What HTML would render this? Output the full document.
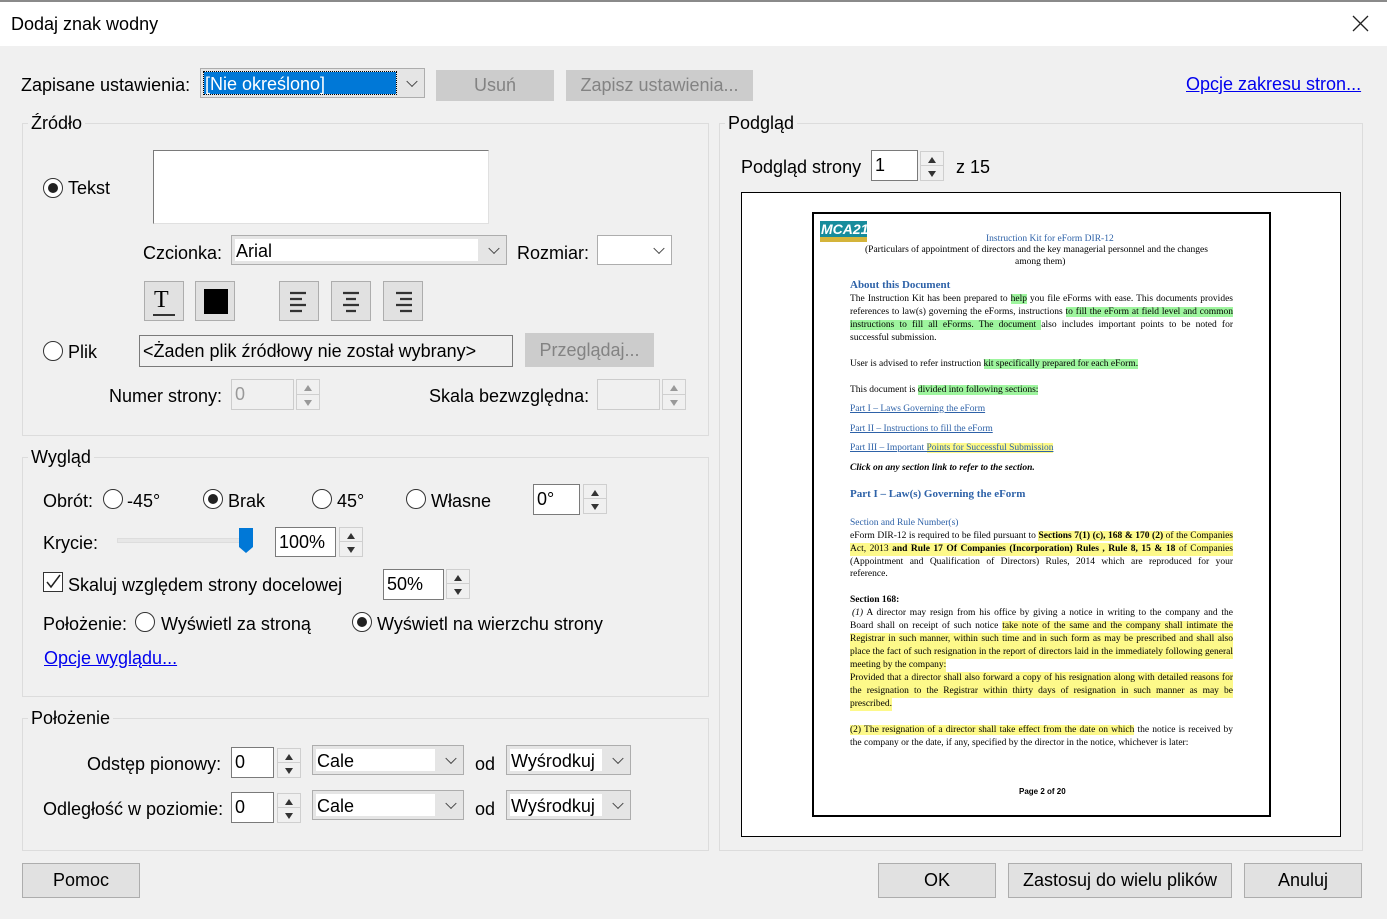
<!DOCTYPE html>
<html><head><meta charset="utf-8"><style>
*{box-sizing:border-box;margin:0;padding:0}
body{width:1387px;height:919px;background:#f0f0f0;font-family:"Liberation Sans",sans-serif;font-size:18px;color:#000;position:relative;overflow:hidden}
.a{position:absolute;white-space:nowrap}
.grp{position:absolute;border:1px solid #dcdcdc}
.gl{position:absolute;background:#f0f0f0;padding:0 3px;top:-10px;left:5px;line-height:18px}
.btn{position:absolute;background:#e1e1e1;border:1px solid #adadad;text-align:center}
.dis{background:#cccccc;border-color:#cccccc;color:#838383}
.inp{position:absolute;background:#fff;border:1px solid #7a7a7a;padding-left:3px}
.cmb{position:absolute;background:#e5e5e5;border:1px solid #adadad}
.cmb .t{position:absolute;left:3px;top:3px;bottom:3px;right:28px;background:#fff;padding-left:1px;line-height:24px}
.cmb .ch{position:absolute;right:8px;top:50%;width:8px;height:8px;border-right:1px solid #444;border-bottom:1px solid #444;transform:translateY(-70%) rotate(45deg)}
.rad{position:absolute;width:20px;height:20px;border:1px solid #333;border-radius:50%;background:#fff}
.rad.on::after{content:"";position:absolute;left:4px;top:4px;width:10px;height:10px;border-radius:50%;background:#222}
.spin{position:absolute;width:24px;border:1px solid #cfcfcf;background:#f0f0f0}
.spin div{height:50%;position:relative;border-bottom:1px solid #cfcfcf}
.spin div:last-child{border-bottom:none}
.spin .u::after{content:"";position:absolute;left:7px;top:5px;border:4px solid transparent;border-bottom:6px solid #333;border-top:none}
.spin .d::after{content:"";position:absolute;left:7px;top:5px;border:4px solid transparent;border-top:6px solid #333;border-bottom:none}
.spin.g .u::after{border-bottom-color:#999}.spin.g .d::after{border-top-color:#999}
.lnk{color:#0000ee;text-decoration:underline}
.ib{position:absolute;width:40px;height:40px;background:#e1e1e1;border:1px solid #adadad}
.doc{font-family:"Liberation Serif",serif;font-size:9.5px;line-height:13px;position:absolute;white-space:nowrap}
.j{width:383px;text-align:justify;text-align-last:justify;white-space:normal;height:13px;overflow:hidden}
.hg{background:#9ef59e}.hy{background:#fdf98a}
.bl{color:#2e62a8}
</style></head><body>
<div class="a" style="left:0;top:0;width:1387px;height:46px;background:#fff"></div>
<div class="a" style="left:0;top:0;width:1387px;height:2px;background:#8a8a8a"></div>
<div class="a" style="left:11px;top:14px;font-size:18px">Dodaj znak wodny</div>
<svg class="a" style="left:1352px;top:15px" width="17" height="17"><path d="M1 1L16 16M16 1L1 16" stroke="#222" stroke-width="1.3"/></svg>

<div class="a" style="left:21px;top:75px">Zapisane ustawienia:</div>
<div class="cmb" style="left:200px;top:68px;width:225px;height:30px;"><div class="t" style="right:28px;background:#0078d7;color:#fff;outline:1px dotted #000">[Nie określono]</div><div class="ch"></div></div>
<div class="btn dis" style="left:436px;top:70px;width:118px;height:31px;line-height:29px">Usuń</div>
<div class="btn dis" style="left:566px;top:70px;width:187px;height:31px;line-height:29px">Zapisz ustawienia...</div>
<div class="a lnk" style="left:1186px;top:74px">Opcje zakresu stron...</div>

<div class="grp" style="left:22px;top:123px;width:687px;height:313px"><div class="gl">Źródło</div></div>
<div class="rad on" style="left:43px;top:178px"></div><div class="a" style="left:68px;top:178px">Tekst</div>
<div class="inp" style="left:153px;top:150px;width:336px;height:74px;border-color:#7a7a7a #e0e0e0 #e0e0e0 #7a7a7a"></div>
<div class="a" style="left:143px;top:243px">Czcionka:</div>
<div class="cmb" style="left:231px;top:235px;width:276px;height:30px"><div class="t">Arial</div><div class="ch"></div></div>
<div class="a" style="left:517px;top:243px">Rozmiar:</div>
<div class="cmb" style="left:597px;top:235px;width:75px;height:30px;background:#fff"><div class="ch"></div></div>
<div class="ib" style="left:144px;top:281px;width:40px"><div class="a" style="left:9px;top:6px;font-family:'Liberation Serif';font-size:24px;line-height:24px">T</div><div class="a" style="left:8px;top:32px;width:22px;height:2px;background:#333"></div></div>
<div class="ib" style="left:195px;top:281px"><div class="a" style="left:8px;top:7px;width:24px;height:25px;background:#000"></div></div>
<div class="ib" style="left:279px;top:281px"><svg class="a" style="left:9px;top:9px" width="22" height="22"><path d="M1 2h16M1 8h12M1 14h16M1 20h12" stroke="#333" stroke-width="2.2"/></svg></div>
<div class="ib" style="left:331px;top:281px"><svg class="a" style="left:9px;top:9px" width="22" height="22"><path d="M2 2h16M5 8h10M2 14h16M5 20h10" stroke="#333" stroke-width="2.2"/></svg></div>
<div class="ib" style="left:383px;top:281px"><svg class="a" style="left:9px;top:9px" width="22" height="22"><path d="M3 2h16M7 8h12M3 14h16M7 20h12" stroke="#333" stroke-width="2.2"/></svg></div>
<div class="rad" style="left:43px;top:341px"></div><div class="a" style="left:68px;top:342px">Plik</div>
<div class="inp" style="left:139px;top:335px;width:374px;height:32px;background:#f0f0f0;line-height:30px">&lt;Żaden plik źródłowy nie został wybrany&gt;</div>
<div class="btn dis" style="left:525px;top:333px;width:129px;height:34px;line-height:32px">Przeglądaj...</div>
<div class="a" style="left:109px;top:386px">Numer strony:</div>
<div class="inp" style="left:231px;top:379px;width:63px;height:31px;background:#f0f0f0;color:#999;border-color:#ccc;line-height:29px">0</div>
<div class="spin g" style="left:296px;top:379px;height:31px"><div class="u"></div><div class="d"></div></div>
<div class="a" style="left:429px;top:386px">Skala bezwzględna:</div>
<div class="inp" style="left:597px;top:379px;width:63px;height:31px;background:#f0f0f0;border-color:#ccc"></div>
<div class="spin g" style="left:662px;top:379px;height:31px"><div class="u"></div><div class="d"></div></div>

<div class="grp" style="left:22px;top:457px;width:687px;height:240px"><div class="gl">Wygląd</div></div>
<div class="a" style="left:43px;top:491px">Obrót:</div>
<div class="rad" style="left:103px;top:489px"></div><div class="a" style="left:127px;top:491px">-45°</div>
<div class="rad on" style="left:203px;top:489px"></div><div class="a" style="left:228px;top:491px">Brak</div>
<div class="rad" style="left:312px;top:489px"></div><div class="a" style="left:337px;top:491px">45°</div>
<div class="rad" style="left:406px;top:489px"></div><div class="a" style="left:431px;top:491px">Własne</div>
<div class="inp" style="left:533px;top:484px;width:47px;height:31px;line-height:29px">0°</div>
<div class="spin" style="left:583px;top:484px;height:30px"><div class="u"></div><div class="d"></div></div>
<div class="a" style="left:43px;top:533px">Krycie:</div>
<div class="a" style="left:117px;top:538px;width:130px;height:5px;background:#e7e7e7;border:1px solid #ddd"></div>
<svg class="a" style="left:238px;top:528px" width="16" height="26"><path d="M1 0h14v19l-7 6l-7-6z" fill="#0078d7"/></svg>
<div class="inp" style="left:275px;top:527px;width:61px;height:30px;line-height:28px">100%</div>
<div class="spin" style="left:339px;top:527px;height:30px"><div class="u"></div><div class="d"></div></div>
<div class="a" style="left:43px;top:572px;width:20px;height:20px;border:1px solid #333;background:#fff"><svg width="18" height="18"><path d="M3 9l4 5l9-12" stroke="#222" stroke-width="1.5" fill="none"/></svg></div>
<div class="a" style="left:68px;top:575px">Skaluj względem strony docelowej</div>
<div class="inp" style="left:383px;top:569px;width:61px;height:31px;line-height:29px">50%</div>
<div class="spin" style="left:446px;top:569px;height:30px"><div class="u"></div><div class="d"></div></div>
<div class="a" style="left:43px;top:614px">Położenie:</div>
<div class="rad" style="left:135px;top:612px"></div><div class="a" style="left:161px;top:614px">Wyświetl za stroną</div>
<div class="rad on" style="left:352px;top:612px"></div><div class="a" style="left:377px;top:614px">Wyświetl na wierzchu strony</div>
<div class="a lnk" style="left:44px;top:648px">Opcje wyglądu...</div>

<div class="grp" style="left:22px;top:718px;width:687px;height:133px"><div class="gl">Położenie</div></div>
<div class="a" style="left:87px;top:754px">Odstęp pionowy:</div>
<div class="inp" style="left:231px;top:747px;width:43px;height:31px;line-height:29px">0</div>
<div class="spin" style="left:277px;top:748px;height:30px"><div class="u"></div><div class="d"></div></div>
<div class="cmb" style="left:312px;top:745px;width:152px;height:30px"><div class="t" style="right:28px">Cale</div><div class="ch"></div></div>
<div class="a" style="left:475px;top:754px">od</div>
<div class="cmb" style="left:506px;top:745px;width:125px;height:30px"><div class="t" style="right:28px">Wyśrodkuj</div><div class="ch"></div></div>
<div class="a" style="left:43px;top:799px">Odległość w poziomie:</div>
<div class="inp" style="left:231px;top:792px;width:43px;height:31px;line-height:29px">0</div>
<div class="spin" style="left:277px;top:793px;height:30px"><div class="u"></div><div class="d"></div></div>
<div class="cmb" style="left:312px;top:790px;width:152px;height:30px"><div class="t" style="right:28px">Cale</div><div class="ch"></div></div>
<div class="a" style="left:475px;top:799px">od</div>
<div class="cmb" style="left:506px;top:790px;width:125px;height:30px"><div class="t" style="right:28px">Wyśrodkuj</div><div class="ch"></div></div>

<div class="btn" style="left:22px;top:863px;width:118px;height:35px;line-height:33px">Pomoc</div>
<div class="btn" style="left:878px;top:863px;width:118px;height:35px;line-height:33px">OK</div>
<div class="btn" style="left:1008px;top:863px;width:224px;height:35px;line-height:33px">Zastosuj do wielu plików</div>
<div class="btn" style="left:1244px;top:863px;width:118px;height:35px;line-height:33px">Anuluj</div>

<div class="grp" style="left:719px;top:123px;width:644px;height:728px"><div class="gl">Podgląd</div></div>
<div class="a" style="left:741px;top:157px">Podgląd strony</div>
<div class="inp" style="left:871px;top:150px;width:47px;height:31px;line-height:29px">1</div>
<div class="spin" style="left:920px;top:151px;height:30px"><div class="u"></div><div class="d"></div></div>
<div class="a" style="left:956px;top:157px">z 15</div>
<div class="a" style="left:741px;top:192px;width:600px;height:645px;background:#fff;border:1px solid #000"></div>
<div class="a" style="left:812px;top:212px;width:459px;height:605px;background:#fff;border:2px solid #000"></div>
<div class="a" style="left:820px;top:221px;width:47px;height:21px;background:#178c9c;color:#fff;font:bold italic 14px 'Liberation Sans';line-height:16px;padding-left:1px">MCA21</div>
<div class="a" style="left:820px;top:237px;width:47px;height:5px;background:#d4b43a"></div>
<div class="doc bl" style="left:986px;top:233px">Instruction Kit for eForm DIR-12</div>
<div class="doc" style="left:865px;top:244px">(Particulars of appointment of directors and the key managerial personnel and the changes</div>
<div class="doc" style="left:1015px;top:256px">among them)</div>
<div class="doc bl" style="left:850px;top:279px;font-size:11px;font-weight:bold">About this Document</div>
<div class="doc j" style="left:850px;top:293px">The Instruction Kit has been prepared to <span class="hg">help</span> you file eForms with ease. This documents provides</div>
<div class="doc j" style="left:850px;top:306px">references to law(s) governing the eForms, instructions <span class="hg">to fill the eForm at field level and common</span></div>
<div class="doc j" style="left:850px;top:319px"><span class="hg">instructions to fill all eForms. The document </span>also includes important points to be noted for</div>
<div class="doc" style="left:850px;top:332px">successful submission.</div>
<div class="doc" style="left:850px;top:358px">User is advised to refer instruction <span class="hg">kit specifically prepared for each eForm.</span></div>
<div class="doc" style="left:850px;top:384px">This document is <span class="hg">divided into following sections:</span></div>
<div class="doc bl" style="left:850px;top:403px;text-decoration:underline">Part I – Laws Governing the eForm</div>
<div class="doc bl" style="left:850px;top:423px;text-decoration:underline">Part II – Instructions to fill the eForm</div>
<div class="doc bl" style="left:850px;top:442px;text-decoration:underline">Part III – Important <span class="hy">Points for Successful Submission</span></div>
<div class="doc" style="left:850px;top:462px;font-weight:bold;font-style:italic">Click on any section link to refer to the section.</div>
<div class="doc bl" style="left:850px;top:488px;font-size:11px;font-weight:bold">Part I – Law(s) Governing the eForm</div>
<div class="doc bl" style="left:850px;top:517px">Section and Rule Number(s)</div>
<div class="doc j" style="left:850px;top:530px">eForm DIR-12 is required to be filed pursuant to <span class="hy"><b>Sections 7(1) (c), 168 &amp; 170 (2)</b> of the Companies</span></div>
<div class="doc j hy" style="left:850px;top:543px">Act, 2013 <b>and Rule 17 Of Companies (Incorporation) Rules , Rule 8, 15 &amp; 18</b> of Companies</div>
<div class="doc j" style="left:850px;top:556px">(Appointment and Qualification of Directors) Rules, 2014 which are reproduced for your</div>
<div class="doc" style="left:850px;top:568px">reference.</div>
<div class="doc" style="left:850px;top:594px;font-weight:bold">Section 168:</div>
<div class="doc j" style="left:852px;top:607px;width:381px"><i>(1)</i> A director may resign from his office by giving a notice in writing to the company and the</div>
<div class="doc j" style="left:850px;top:620px">Board shall on receipt of such notice <span class="hy">take note of the same and the company shall intimate the</span></div>
<div class="doc j hy" style="left:850px;top:633px">Registrar in such manner, within such time and in such form as may be prescribed and shall also</div>
<div class="doc j hy" style="left:850px;top:646px">place the fact of such resignation in the report of directors laid in the immediately following general</div>
<div class="doc hy" style="left:850px;top:659px">meeting by the company:</div>
<div class="doc j hy" style="left:850px;top:672px">Provided that a director shall also forward a copy of his resignation along with detailed reasons for</div>
<div class="doc j hy" style="left:850px;top:685px">the resignation to the Registrar within thirty days of resignation in such manner as may be</div>
<div class="doc hy" style="left:850px;top:698px">prescribed.</div>
<div class="doc j" style="left:850px;top:724px"><span class="hy">(2) The resignation of a director shall take effect from the date on which</span> the notice is received by</div>
<div class="doc" style="left:850px;top:737px">the company or the date, if any, specified by the director in the notice, whichever is later:</div>
<div class="doc" style="left:1019px;top:785px;font-family:'Liberation Sans';font-size:8px;font-weight:bold">Page 2 of 20</div>
</body></html>
